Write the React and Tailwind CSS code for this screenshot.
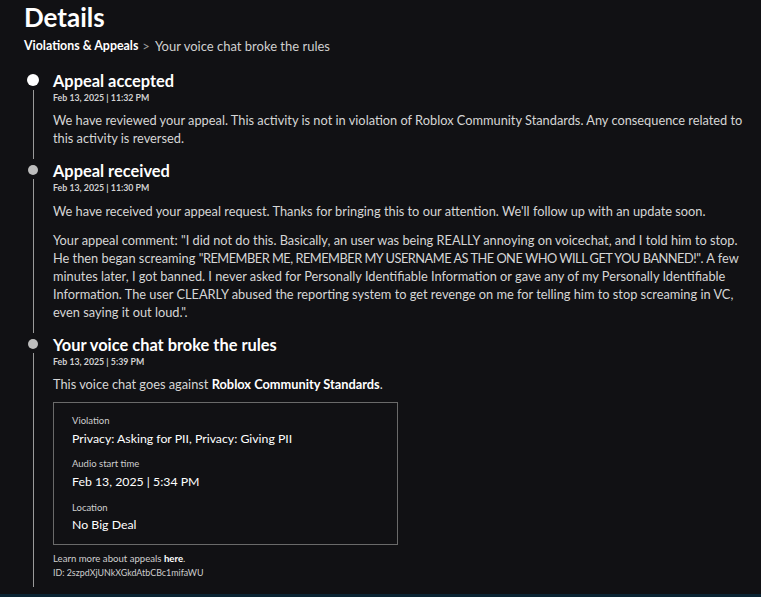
export default function App() {
    const items = [
        {
            title: "Appeal accepted",
            date: "Feb 13, 2025 | 11:32 PM",
            active: true,
        },
        {
            title: "Appeal received",
            date: "Feb 13, 2025 | 11:30 PM",
        },
        {
            title: "Your voice chat broke the rules",
            date: "Feb 13, 2025 | 5:39 PM",
        },
    ];

    const Dot = ({ active }) => (
        active
            ? <div className="w-[12px] h-[12px] rounded-full bg-white mt-[2px]" />
            : <div className="w-[10px] h-[10px] rounded-full bg-[#bdbdbd] mt-[3px]" />
    );

    const Rail = ({ active }) => (
        <div className="flex flex-col items-center w-[18px] shrink-0">
            <Dot active={active} />
            <div className="flex-1 w-px bg-[#9a9a9a] mt-[4px] mb-[3px]" />
        </div>
    );

    const Heading = ({ item }) => (
        <>
            <h3 className="text-[16.4px] font-bold text-white leading-[18px]">{item.title}</h3>
            <p className="text-[8.8px] font-bold text-[#d0d0d0] leading-[12px] mt-[2px]">{item.date}</p>
        </>
    );

    return (
        <div className="min-h-[597px] bg-[#111114] text-[#d6d6d6] font-['Lato',sans-serif] pl-6 pr-2 pt-[1px] border-b-[3px] border-[#0b2433]">
            <h1 className="text-[26px] font-bold text-white leading-[32px]">Details</h1>
            <div className="mt-[4px] text-[13px] flex items-center">
                <span className="text-white font-bold text-[12.4px]">Violations &amp; Appeals</span>
                <span className="text-[#9a9a9a] ml-[4px] mr-[5px]">&gt;</span>
                <span className="text-[#cfcfcf]">Your voice chat broke the rules</span>
            </div>

            <div className="mt-[15px]">
                {/* item 1 */}
                <div className="flex gap-[11px]">
                    <Rail active />
                    <div className="pb-[15px]">
                        <Heading item={items[0]} />
                        <p className="text-[12.8px] leading-[18px] mt-[7px]">
                            We have reviewed your appeal. This activity is not in violation of Roblox Community Standards. Any consequence related to<br />
                            this activity is reversed.
                        </p>
                    </div>
                </div>

                {/* item 2 */}
                <div className="flex gap-[11px]">
                    <Rail />
                    <div className="pb-[15px]">
                        <Heading item={items[1]} />
                        <p className="text-[12.8px] leading-[18px] mt-[8px]">
                            We have received your appeal request. Thanks for bringing this to our attention. We'll follow up with an update soon.
                        </p>
                        <p className="text-[12.8px] leading-[18px] mt-[11px] whitespace-nowrap">
                            Your appeal comment: "I did not do this. Basically, an user was being REALLY annoying on voicechat, and I told him to stop.<br />
                            He then began screaming <span className="tracking-[-0.5px]">"REMEMBER ME, REMEMBER MY USERNAME AS THE ONE WHO WILL GET YOU BANNED!"</span>. A few<br />
                            minutes later, I got banned. I never asked for Personally Identifiable Information or gave any of my Personally Identifiable<br />
                            Information. The user CLEARLY abused the reporting system to get revenge on me for telling him to stop screaming in VC,<br />
                            even saying it out loud.".
                        </p>
                    </div>
                </div>

                {/* item 3 */}
                <div className="flex gap-[11px]">
                    <Rail />
                    <div className="pb-[10px]">
                        <Heading item={items[2]} />
                        <p className="text-[12.8px] leading-[18px] mt-[7px]">
                            This voice chat goes against <span className="text-white font-bold">Roblox Community Standards</span>.
                        </p>
                        <div className="mt-[9px] w-[345px] border border-[#6a6a6a] pl-[18px] pt-[11px] pb-[10px]">
                            <p className="text-[9.5px] text-[#cfcfcf] leading-[14px]">Violation</p>
                            <p className="text-[12.3px] text-white leading-[18px] mt-[2px]">Privacy: Asking for PII, Privacy: Giving PII</p>
                            <p className="text-[9.5px] text-[#cfcfcf] leading-[14px] mt-[9px]">Audio start time</p>
                            <p className="text-[12.3px] text-white leading-[18px] mt-[2px]">Feb 13, 2025 | 5:34 PM</p>
                            <p className="text-[9.5px] text-[#cfcfcf] leading-[14px] mt-[10px]">Location</p>
                            <p className="text-[12.3px] text-white leading-[18px] mt-[1px]">No Big Deal</p>
                        </div>
                        <p className="text-[9.6px] text-[#cfcfcf] leading-[14px] mt-[7px]">
                            Learn more about appeals <span className="text-white font-bold">here</span>.
                        </p>
                        <p className="text-[8.9px] text-[#cfcfcf] leading-[14px]">ID: 2szpdXjUNkXGkdAtbCBc1mifaWU</p>
                    </div>
                </div>
            </div>
        </div>
    );
}
